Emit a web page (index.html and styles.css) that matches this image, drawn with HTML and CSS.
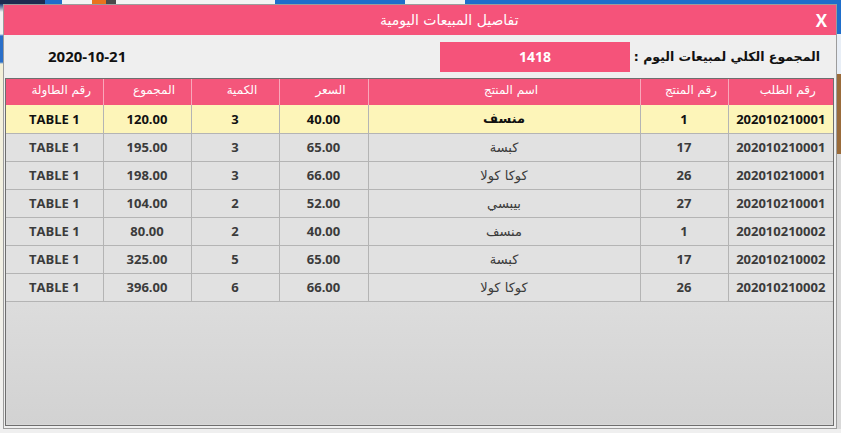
FILE: index.html
```html
<!DOCTYPE html>
<html lang="ar">
<head>
<meta charset="utf-8">
<title>تفاصيل المبيعات اليومية</title>
<link rel="stylesheet" href="styles.css">
</head>
<body>
<div class="desk">
  <div class="topstrip">
    <span class="seg navy" style="width:45px"></span>
    <span class="seg blue" style="width:17px"></span>
    <span class="seg white" style="width:30px"></span>
    <span class="seg orange" style="width:14px"></span>
    <span class="seg dark" style="width:10px"></span>
    <span class="seg white" style="width:159px"></span>
    <span class="seg blue" style="width:130px"></span>
    <span class="seg white" style="width:60px"></span>
    <span class="seg blue" style="width:376px"></span>
  </div>
  <div class="mid">
    <div class="leftstrip"></div>
    <div class="dialog">
      <div class="titlebar">
        <span class="title">تفاصيل المبيعات اليومية</span>
        <span class="close">X</span>
      </div>
      <div class="summary">
        <span class="date">2020-10-21</span>
        <span class="total">1418</span>
        <span class="label" dir="rtl">المجموع الكلي لمبيعات اليوم :</span>
      </div>
      <div class="grid">
        <table class="sales" dir="rtl">
          <colgroup>
            <col class="c-order"><col class="c-pid"><col class="c-name"><col class="c-price"><col class="c-qty"><col class="c-sum"><col class="c-table">
          </colgroup>
          <thead>
            <tr><th>رقم الطلب</th><th>رقم المنتج</th><th>اسم المنتج</th><th>السعر</th><th>الكمية</th><th>المجموع</th><th>رقم الطاولة</th></tr>
          </thead>
          <tbody>
            <tr class="sel"><td>202010210001</td><td>1</td><td class="ar">منسف</td><td>40.00</td><td>3</td><td>120.00</td><td>TABLE 1</td></tr>
            <tr><td>202010210001</td><td>17</td><td class="ar">كبسة</td><td>65.00</td><td>3</td><td>195.00</td><td>TABLE 1</td></tr>
            <tr><td>202010210001</td><td>26</td><td class="ar">كوكا كولا</td><td>66.00</td><td>3</td><td>198.00</td><td>TABLE 1</td></tr>
            <tr><td>202010210001</td><td>27</td><td class="ar">بيبسي</td><td>52.00</td><td>2</td><td>104.00</td><td>TABLE 1</td></tr>
            <tr><td>202010210002</td><td>1</td><td class="ar">منسف</td><td>40.00</td><td>2</td><td>80.00</td><td>TABLE 1</td></tr>
            <tr><td>202010210002</td><td>17</td><td class="ar">كبسة</td><td>65.00</td><td>5</td><td>325.00</td><td>TABLE 1</td></tr>
            <tr><td>202010210002</td><td>26</td><td class="ar">كوكا كولا</td><td>66.00</td><td>6</td><td>396.00</td><td>TABLE 1</td></tr>
          </tbody>
        </table>
      </div>
    </div>
    <div class="rightstrip">
      <span class="rs blue" style="height:30px"></span>
      <span class="rs white" style="height:40px"></span>
      <span class="rs brown" style="height:80px"></span>
      <span class="rs gray"></span>
    </div>
  </div>
  <div class="bottomstrip"></div>
</div>
</body>
</html>
```

FILE: styles.css
```css
* { box-sizing: border-box; }
html, body { margin: 0; padding: 0; }
body {
  width: 841px;
  height: 433px;
  overflow: hidden;
  background: #f0f0f0;
  font-family: "Open Sans", "DejaVu Sans", sans-serif;
}
.desk { width: 841px; height: 433px; display: flex; flex-direction: column; }
.topstrip { height: 4px; display: flex; flex: none; }
.seg { display: block; height: 4px; }
.navy { background: #1d2b50; }
.blue { background: #1f6ecb; }
.white { background: #f3f3f3; }
.orange { background: #e8731f; }
.dark { background: #4a4a4a; }
.mid { display: flex; height: 425px; flex: none; }
.leftstrip {
  width: 3px;
  background: linear-gradient(#1f3f7a 0, #f2f2f2 8px, #f2f2f2 30px, #2a6fc9 32px, #2a6fc9 58px, #f4f0d8 60px, #f0f0f0 100%);
}
.rightstrip { width: 4px; display: flex; flex-direction: column; }
.rs { display: block; }
.rs.blue { background: #1f6ecb; }
.rs.white { background: #e8eef6; }
.rs.brown { background: #9a6b3a; }
.rs.gray { flex: 1; background: #d9d9d9; }
.bottomstrip { height: 4px; background: #efefef; }

.dialog {
  width: 834px;
  height: 425px;
  border: 1px solid #9c9c9c;
  background: #efefef;
  display: flex;
  flex-direction: column;
}
.titlebar {
  height: 30px;
  background: #f5537a;
  color: #fff;
  display: flex;
  align-items: center;
  padding-left: 376px;
  padding-right: 9px;
  flex: none;
}
.title { font-size: 14px; font-family: "DejaVu Sans", sans-serif; }
.close { margin-left: auto; font-size: 17px; font-weight: 700; font-family: "Open Sans", sans-serif; }

.summary {
  height: 43px;
  display: flex;
  align-items: center;
  padding-left: 44px;
  padding-right: 16px;
  flex: none;
}
.date { font-size: 15px; font-weight: 700; color: #111; margin-top: -2px; }
.total {
  margin-left: auto;
  width: 190px;
  height: 30px;
  background: #f5537a;
  color: #fff;
  font-size: 14px;
  font-weight: 700;
  display: flex;
  align-items: center;
  justify-content: center;
}
.label {
  margin-left: 6px;
  width: 184px;
  font-size: 12.5px;
  font-weight: 700;
  color: #111;
  font-family: "DejaVu Sans", sans-serif;
  text-align: right;
  white-space: nowrap;
}

.grid {
  height: 348px;
  margin: 0 2px 0 1px;
  border: 1px solid #6e6e6e;
  box-shadow: inset 0 0 0 1px #d8d8d8;
  background: linear-gradient(#efefef, #d2d2d2);
  flex: none;
}
.sales {
  width: 827px;
  border-collapse: collapse;
  table-layout: fixed;
}
.c-order { width: 105px; }
.c-pid { width: 88px; }
.c-name { width: 272px; }
.c-price { width: 89px; }
.c-qty { width: 88px; }
.c-sum { width: 88px; }
.c-table { width: 97px; }

.sales th {
  height: 26px;
  background: #f4567b;
  color: #fff;
  font-family: "DejaVu Sans", sans-serif;
  font-weight: 400;
  font-size: 12px;
  text-align: center;
  padding: 0 0 4px 14px;
  border-left: 1px solid #f9a8ba;
}
.sales th:last-child { border-left: none; }
.sales td {
  height: 28px;
  background: #e1e1e1;
  color: #3b3b3b;
  font-size: 13px;
  font-weight: 700;
  text-align: center;
  padding: 0;
  border-left: 1px solid #b4b4b4;
  border-bottom: 1px solid #b4b4b4;
}
.sales td:last-child { border-left: none; }
.sales td.ar { font-family: "DejaVu Sans", sans-serif; font-weight: 400; font-size: 13px; }
.sales tr.sel td { background: #fdf5b9; color: #111; }
.sales tr.sel td.ar { font-weight: 700; }
```
